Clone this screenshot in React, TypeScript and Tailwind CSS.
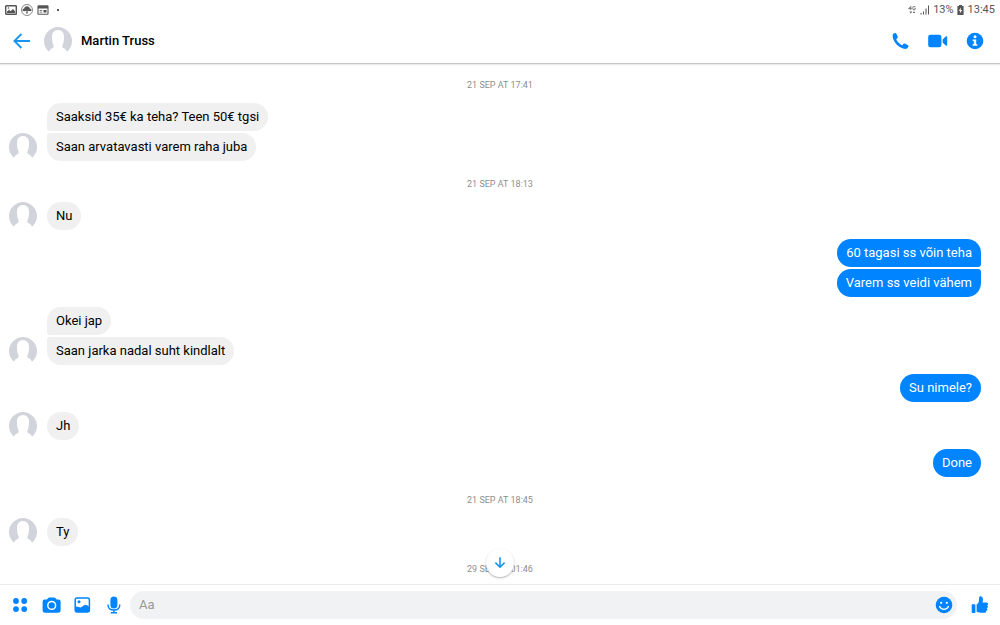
import type { ReactNode } from 'react';

type Entry =
  | { kind: 'time'; text: string }
  | { kind: 'in'; lines: string[] }
  | { kind: 'out'; lines: string[] };

const entries: Entry[] = [
  { kind: 'time', text: '21 SEP AT 17:41' },
  { kind: 'in', lines: ['Saaksid 35€ ka teha? Teen 50€ tgsi', 'Saan arvatavasti varem raha juba'] },
  { kind: 'time', text: '21 SEP AT 18:13' },
  { kind: 'in', lines: ['Nu'] },
  { kind: 'out', lines: ['60 tagasi ss võin teha', 'Varem ss veidi vähem'] },
  { kind: 'in', lines: ['Okei jap', 'Saan jarka nadal suht kindlalt'] },
  { kind: 'out', lines: ['Su nimele?'] },
  { kind: 'in', lines: ['Jh'] },
  { kind: 'out', lines: ['Done'] },
  { kind: 'time', text: '21 SEP AT 18:45' },
  { kind: 'in', lines: ['Ty'] },
  { kind: 'time', text: '29 SEP AT 01:46' },
];

function Avatar() {
  return (
    <svg className="size-7 shrink-0" viewBox="0 0 28 28" aria-hidden="true">
      <path
        fill="#d1d4db"
        d="M5 24.8A14 14 0 1 1 23 24.8C22.4 22.6 20.6 21.8 19 21C18.2 20.5 18.2 18.8 18.6 17.8C19.6 16.2 19.8 14 20 11.5C20.4 6.5 18.4 3 14 3C9.6 3 7.6 6.5 8 11.5C8.2 14 8.4 16.2 9.4 17.8C9.8 18.8 9.8 20.5 9 21C7.4 21.8 5.6 22.6 5 24.8Z"
      />
    </svg>
  );
}

function IconButton({ label, children }: { label: string; children: ReactNode }) {
  return (
    <button type="button" aria-label={label} className="flex size-5 shrink-0 items-center justify-center text-[#0084ff]">
      {children}
    </button>
  );
}

function StatusBar() {
  return (
    <div className="flex h-5 items-center justify-between px-[5px] text-[#555]">
      <div className="flex items-center gap-1">
        <svg className="h-[10px] w-3" viewBox="0 0 12 10">
          <rect x="0.7" y="0.7" width="10.6" height="8.6" rx="0.6" fill="none" stroke="currentColor" strokeWidth="1.4" />
          <path d="M2 8V6.5L4 4.8L5.5 6.2L8 4L10 6.2V8Z" fill="currentColor" />
          <circle cx="3.5" cy="3" r="0.8" fill="currentColor" />
        </svg>
        <svg className="size-3" viewBox="0 0 12 12">
          <circle cx="6" cy="6" r="5.5" fill="none" stroke="currentColor" strokeWidth="0.7" />
          <path d="M1.6 6.8C1.1 5.5 2.2 4.4 3.2 4.4C3.4 2.9 4.8 2.2 6 2.2C7.2 2.2 8.6 2.9 8.8 4.4C9.8 4.4 10.9 5.5 10.4 6.8C9 7.6 7.5 7 6.5 6.8L6.8 9.5H5.2L5.5 6.8C4.5 7 3 7.6 1.6 6.8Z" fill="currentColor" />
        </svg>
        <svg className="h-[10px] w-3" viewBox="0 0 12 10">
          <rect x="1" y="0.7" width="10" height="8.6" rx="0.6" fill="none" stroke="currentColor" strokeWidth="1.1" />
          <path d="M1 1h10v2.4H1zM6.5 5h3v2.6h-3zM2.6 5h2.6v.8H2.6zM2.6 6.8h2.6v.8H2.6z" fill="currentColor" />
        </svg>
        <span className="ml-1 size-[2px] rounded-full bg-[#222]" />
      </div>
      <div className="flex items-center text-[11px] leading-5">
        <svg className="mr-1 size-2" viewBox="0 0 8 8" fill="none" stroke="currentColor" strokeWidth="0.8">
          <path d="M2.8 3.8V0.4L0.6 2.7H3.6M7.3 1A1.3 1.3 0 0 0 4.8 1.6V2.6A1.2 1.2 0 0 0 7.3 2.7V2.1H6.3" />
          <path d="M1.4 5.4H4.2L2.8 7.4ZM4.8 7H7.2L6 5.2Z" fill="currentColor" stroke="none" />
        </svg>
        <svg className="mr-[3px] size-[10px]" viewBox="0 0 10 10" fill="currentColor">
          <path d="M0.5 8H1.6V9.5H0.5zM3 6.5H4V9.5H3zM5.5 3.5H6.5V9.5H5.5zM8 0.5H9V9.5H8z" />
        </svg>
        <span>13%</span>
        <svg className="ml-[3px] mr-1 h-[10px] w-[7px]" viewBox="0 0 7 10">
          <path d="M2 0H5V1H6.6V10H0.4V1H2Z" fill="currentColor" />
          <path d="M4 2.4L1.7 5.8H3.2L2.8 8.4L5.2 5H3.7Z" fill="#fff" />
        </svg>
        <span>13:45</span>
      </div>
    </div>
  );
}

function Header() {
  return (
    <header className="flex h-11 items-center border-b border-[#c4c4c4] pb-px pl-3 pr-[15px] shadow-[0_1px_1px_rgba(0,0,0,0.08)]">
      <button type="button" aria-label="Back" className="mr-3 flex size-5 items-center justify-center text-[#1794f0]">
        <svg className="size-5" viewBox="0 0 20 20" fill="none" stroke="currentColor" strokeWidth="1.8">
          <path d="M18 10H2.6M9.4 3L2.4 10L9.4 17" />
        </svg>
      </button>
      <Avatar />
      <h1 className="ml-[9px] flex-1 text-[13px] font-medium text-black">Martin Truss</h1>
      <div className="flex items-center gap-[17px]">
        <IconButton label="Call">
          <svg className="size-5" viewBox="0 0 20 20" fill="currentColor">
            <path d="M1.6 4.4C1.7 3.1 3.1 2.2 4.1 2C4.8 1.9 5.2 2.3 5.4 2.8L6.7 5.6C7 6.2 6.8 6.7 6.4 7.1L5.5 8.1C5.3 8.4 5.3 8.7 5.5 9C6.8 11 8.4 12.7 10.5 14C10.8 14.2 11.1 14.2 11.4 13.9L12.4 12.9C12.8 12.5 13.3 12.4 13.8 12.6L16.7 14.1C17.3 14.4 17.5 14.9 17.4 15.5C17 17 15.7 17.9 14.4 17.9C8.2 17.4 1.7 10.8 1.6 4.4Z" />
          </svg>
        </IconButton>
        <IconButton label="Video call">
          <svg className="size-5" viewBox="0 0 20 20" fill="currentColor">
            <rect x="0.2" y="3.8" width="13.2" height="12.4" rx="2.2" />
            <path d="M14.6 8.6L17.8 5.6C18.4 5.1 19.2 5.3 19.2 6V14C19.2 14.7 18.4 14.9 17.8 14.4L14.6 11.4Z" />
          </svg>
        </IconButton>
        <IconButton label="Conversation details">
          <svg className="size-5" viewBox="0 0 20 20">
            <circle cx="10" cy="10" r="8.3" fill="currentColor" />
            <circle cx="10" cy="5.8" r="1.5" fill="#fff" />
            <path d="M7.6 8.4H11.2V13.2H12.4V14.8H7.6V13.2H8.8V10H7.6Z" fill="#fff" />
          </svg>
        </IconButton>
      </div>
    </header>
  );
}

function Incoming({ lines }: { lines: string[] }) {
  return (
    <div className="mt-[10px] flex items-end gap-[10px] pl-[9px]">
      <Avatar />
      <div className="flex flex-col items-start gap-[2px]">
        {lines.map((line, i) => (
          <p
            key={line}
            className={`rounded-[14px] bg-[#f0f0f0] px-[9px] text-[13px] leading-7 text-black ${
              lines.length > 1 ? (i === 0 ? 'rounded-bl-[3px]' : 'rounded-tl-[3px]') : ''
            }`}
          >
            {line}
          </p>
        ))}
      </div>
    </div>
  );
}

function Outgoing({ lines }: { lines: string[] }) {
  return (
    <div className="mt-[9px] flex flex-col items-end gap-[2px] pr-[19px]">
      {lines.map((line, i) => (
        <p
          key={line}
          className={`rounded-[14px] bg-[#0084ff] px-[9px] text-[13px] leading-7 text-white ${
            lines.length > 1 ? (i === 0 ? 'rounded-br-[3px]' : 'rounded-tr-[3px]') : ''
          }`}
        >
          {line}
        </p>
      ))}
    </div>
  );
}

function Composer() {
  return (
    <footer className="flex items-center border-t border-[#ececec] px-[10px] py-[6px]">
      <div className="mr-[7px] flex items-center gap-[11px]">
        <IconButton label="More">
          <svg className="size-5" viewBox="0 0 20 20" fill="currentColor">
            <circle cx="6" cy="6" r="2.9" />
            <circle cx="14.2" cy="6" r="2.9" />
            <circle cx="6" cy="14.1" r="2.9" />
            <circle cx="14.2" cy="14.1" r="2.9" />
          </svg>
        </IconButton>
        <IconButton label="Camera">
          <svg className="size-5" viewBox="0 0 20 20">
            <path d="M3.7 4.6H5.9L7.2 3C7.5 2.6 7.9 2.4 8.4 2.4H13.1C13.6 2.4 14 2.6 14.3 3L15.6 4.6H17.5A2.1 2.1 0 0 1 19.6 6.7V15.6A2.1 2.1 0 0 1 17.5 17.7H3.7A2.1 2.1 0 0 1 1.6 15.6V6.7A2.1 2.1 0 0 1 3.7 4.6Z" fill="currentColor" />
            <circle cx="10.7" cy="10.4" r="3.9" fill="none" stroke="#fff" strokeWidth="1.5" />
          </svg>
        </IconButton>
        <IconButton label="Gallery">
          <svg className="size-5" viewBox="0 0 20 20">
            <rect x="3.2" y="3.1" width="14.2" height="13.9" rx="1.7" fill="none" stroke="currentColor" strokeWidth="1.5" />
            <circle cx="7" cy="6.8" r="1.5" fill="currentColor" />
            <path d="M3.2 12.2C5.4 10.6 6.8 12.6 8.6 12.4C10.4 12.2 11.6 9.8 13.4 9.8C15 9.8 16.2 11 17.4 12.4V16.9H3.2Z" fill="currentColor" />
          </svg>
        </IconButton>
        <IconButton label="Voice message">
          <svg className="size-5" viewBox="0 0 20 20">
            <rect x="7.4" y="1.4" width="7" height="12" rx="3.5" fill="currentColor" />
            <path d="M5 9.4C5 13 7.4 15 10.9 15C14.4 15 16.8 13 16.8 9.4M10.9 15V17.4M7.8 17.7H14" fill="none" stroke="currentColor" strokeWidth="1.4" />
          </svg>
        </IconButton>
      </div>
      <div className="flex h-7 flex-1 items-center rounded-full bg-[#f1f2f4] pl-[9px] pr-[3px]">
        <input
          type="text"
          aria-label="Message"
          placeholder="Aa"
          className="min-w-0 flex-1 bg-transparent text-[13px] text-black outline-none placeholder:text-[#999]"
        />
        <IconButton label="Emoji">
          <svg className="size-5" viewBox="0 0 20 20">
            <circle cx="10" cy="10" r="8.3" fill="currentColor" />
            <circle cx="7.2" cy="7.8" r="1.1" fill="#fff" />
            <circle cx="12.8" cy="7.8" r="1.1" fill="#fff" />
            <path d="M5.6 11.5C7.3 15.2 12.7 15.2 14.4 11.5" fill="none" stroke="#fff" strokeWidth="1.3" strokeLinecap="round" />
          </svg>
        </IconButton>
      </div>
      <div className="ml-[13px] flex">
        <IconButton label="Send like">
          <svg className="size-5" viewBox="0 0 20 20" fill="currentColor">
            <path d="M2.7 9.2H4.6C5.1 9.2 5.4 9.5 5.4 10V17.3C5.4 17.8 5.1 18.1 4.6 18.1H2.7C2.1 18.1 1.7 17.7 1.7 17.1V10.2C1.7 9.6 2.1 9.2 2.7 9.2Z" />
            <path d="M6.6 9.6C8.8 8.4 9.2 6.3 9.1 2.8C9.2 1.6 10.2 1.2 11.2 1.4C12.6 1.8 13 3.4 12.9 5C12.9 6 12.6 6.8 12.5 7.4H16.2C17.4 7.4 18.2 8.2 18 9.2C17.9 9.9 17.4 10.3 17.1 10.4C17.8 10.8 18.1 11.4 17.9 12.1C17.8 12.8 17.3 13.2 16.8 13.3C17.3 13.7 17.5 14.3 17.3 14.9C17.1 15.5 16.6 15.8 16.1 15.9C16.2 17.1 15.4 17.8 14.2 17.8H10.6C9 17.8 8 17 6.6 16.8Z" />
          </svg>
        </IconButton>
      </div>
    </footer>
  );
}

export default function App() {
  return (
    <div className="flex h-screen flex-col bg-white font-[Roboto,'Liberation_Sans',sans-serif]">
      <StatusBar />
      <Header />
      <main className="relative min-h-0 flex-1 overflow-hidden">
        <div className="-mt-[2px]">
          {entries.map((entry) => {
            if (entry.kind === 'time') {
              return (
                <p key={entry.text} className="mt-[15px] text-center text-[9px] leading-4 text-[#8e8e8e]">
                  {entry.text}
                </p>
              );
            }
            const key = entry.lines[0];
            return entry.kind === 'in' ? (
              <Incoming key={key} lines={entry.lines} />
            ) : (
              <Outgoing key={key} lines={entry.lines} />
            );
          })}
        </div>
        <button
          type="button"
          aria-label="Scroll to latest"
          className="absolute bottom-[7px] left-1/2 flex size-7 -translate-x-1/2 items-center justify-center rounded-full bg-white text-[#1794f0] shadow-[0_1px_2px_rgba(0,0,0,0.3)]"
        >
          <svg className="size-3" viewBox="0 0 12 12" fill="none" stroke="currentColor" strokeWidth="1.6">
            <path d="M6 0.2V10M1.4 5.6L6 10.2L10.6 5.6" />
          </svg>
        </button>
      </main>
      <Composer />
    </div>
  );
}
